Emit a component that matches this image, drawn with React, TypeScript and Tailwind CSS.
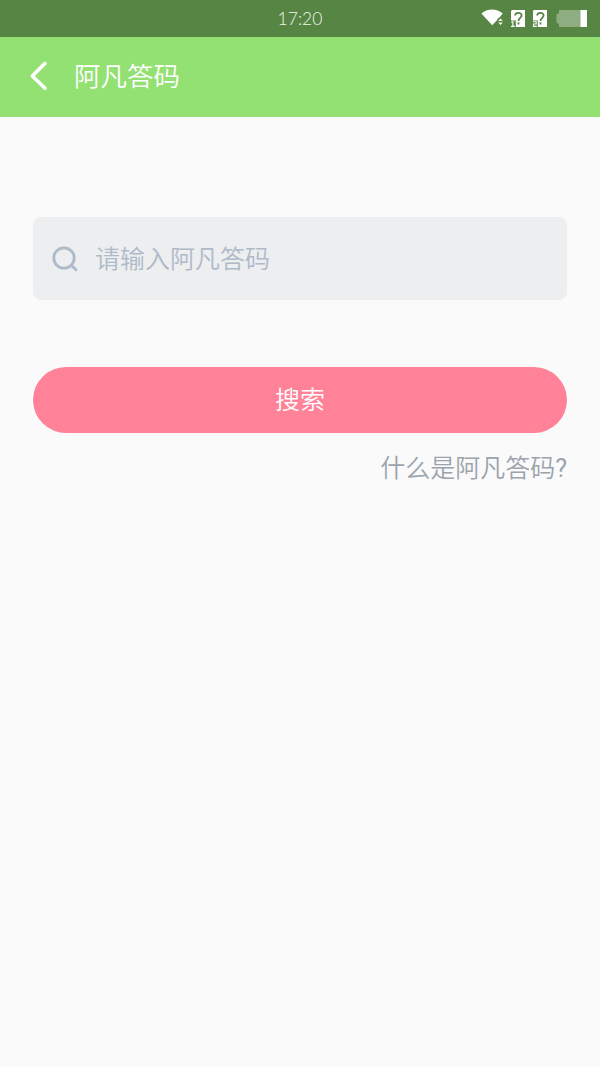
import React from "react";

function WifiIcon() {
  return (
    <svg width="24" height="19" viewBox="0 0 24 19" fill="#fff" aria-hidden="true">
      <path d="M0.4 4.6C6.3-1 15.8-1 21.7 4.6L18.4 8.4C17 8.6 16.4 10.2 16 11.2L11.2 16.2Z" />
      <path d="M17.2 12L19.5 9.4L21.8 12ZM17.2 13.4H21.8L19.5 16Z" />
    </svg>
  );
}

function SimIcon({ slot }: { slot: number }) {
  return (
    <svg width="16" height="19" viewBox="0 0 16 19" aria-hidden="true">
      <path d="M2 1H15V18H5.8V11.5H1V2Z" fill="#fff" />
      <path
        d="M5.2 6.6C5.2 2.9 11.6 2.9 11.6 6.4C11.6 9 8.5 8.8 8.5 12M8.5 13.2V15.4"
        fill="none"
        stroke="#568544"
        strokeWidth="1.8"
      />
      <path
        d={slot === 1 ? "M1.2 13.4L2.9 12.6V17.4M1 17.4H4.8" : "M1 12.8H4.2V15H1.5V17.4H4.8"}
        fill="none"
        stroke="#fff"
        strokeWidth="1.1"
      />
    </svg>
  );
}

function BatteryIcon() {
  return (
    <svg width="32" height="19" viewBox="0 0 32 19" aria-hidden="true">
      <path d="M3 1H25V18H3V14.5H1.5L0.5 13V6L1.5 4.5H3Z" fill="#8eae81" />
      <path d="M24.5 1H31V18H24.5Z" fill="#fff" />
    </svg>
  );
}

export default function App() {
  return (
    <div className="flex h-[1067px] w-[600px] flex-col bg-[#fafafa] font-['Noto_Sans_CJK_SC',sans-serif]">
      <div className="grid h-[37px] grid-cols-3 items-center bg-[#568544]">
        <span className="col-start-2 text-center font-['Lato',sans-serif] text-[17.5px] leading-none font-light text-[#f0f5ee]">
          17:20
        </span>
        <div className="flex items-center justify-end pr-3">
          <WifiIcon />
          <span className="ml-[5px] flex"><SimIcon slot={1} /></span>
          <span className="ml-1.5 flex"><SimIcon slot={2} /></span>
          <span className="ml-2 flex"><BatteryIcon /></span>
        </div>
      </div>
      <header className="flex h-20 items-center bg-[#93e073] pb-0.5 pl-[29px]">
        <button aria-label="返回" className="flex">
          <svg width="20" height="32" viewBox="0 0 20 32" fill="none" stroke="#fff" strokeWidth="3.6" strokeLinecap="round" strokeLinejoin="round">
            <path d="M16 3.4L3.3 16L16 28.2" />
          </svg>
        </button>
        <h1 className="ml-[25px] pb-0.5 text-[26.5px] leading-none font-[350] text-white">阿凡答码</h1>
      </header>
      <main className="flex flex-col px-[33px] pt-[100px]">
        <label className="flex h-[83px] items-center rounded-lg bg-[#eceef0] pl-[19px]">
          <svg width="28" height="28" viewBox="0 0 28 28" fill="none" stroke="#afbac9" strokeWidth="2.8" strokeLinecap="round" aria-hidden="true">
            <circle cx="12" cy="13" r="10.2" />
            <path d="M19.5 20.5L24 24.7" />
          </svg>
          <input
            placeholder="请输入阿凡答码"
            className="ml-[15px] h-full w-[400px] bg-transparent pb-[3px] text-[25px] font-[350] text-gray-700 outline-none placeholder:text-[#afbac9]"
          />
        </label>
        <button className="mt-[67px] h-[66px] rounded-full bg-[#ff8298] pb-[3px] text-[25px] leading-none font-[350] text-white">
          搜索
        </button>
        <a className="mt-[23px] self-end font-['Roboto','Noto_Sans_CJK_SC',sans-serif] text-[25px] leading-none font-[350] text-[#9ba3ac]">什么是阿凡答码<span className="font-normal">?</span></a>
      </main>
    </div>
  );
}
